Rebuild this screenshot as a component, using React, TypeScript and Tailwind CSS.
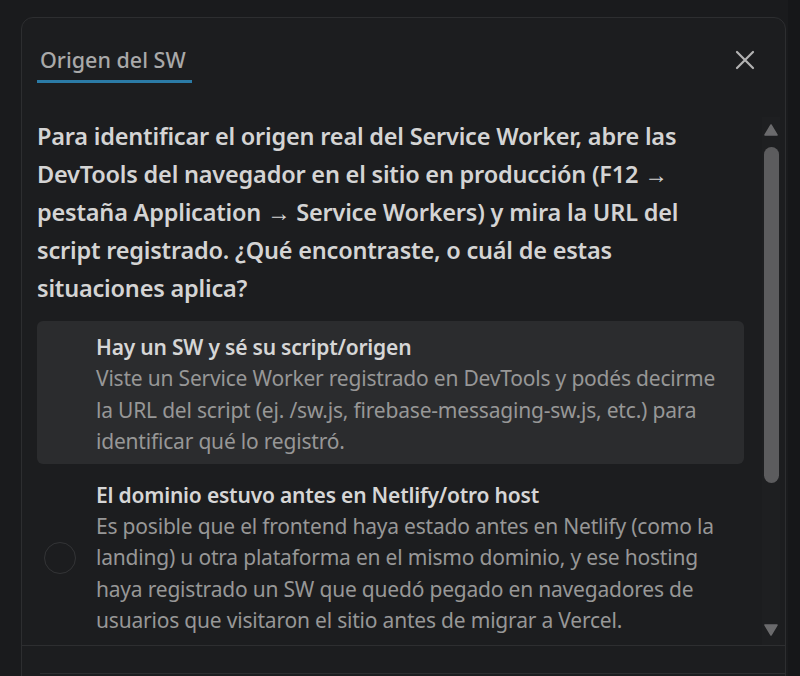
import { useState } from "react";

const options = [
  {
    title: "Hay un SW y sé su script/origen",
    body: "Viste un Service Worker registrado en DevTools y podés decirme la URL del script (ej. /sw.js, firebase-messaging-sw.js, etc.) para identificar qué lo registró.",
  },
  {
    title: "El dominio estuvo antes en Netlify/otro host",
    body: "Es posible que el frontend haya estado antes en Netlify (como la landing) u otra plataforma en el mismo dominio, y ese hosting haya registrado un SW que quedó pegado en navegadores de usuarios que visitaron el sitio antes de migrar a Vercel.",
  },
];

export default function App() {
  const [hovered] = useState(0);

  return (
    <div
      className="w-[800px] h-[676px] overflow-hidden bg-[#1a1b1d] flex"
      style={{ fontFamily: '"Noto Sans", "Open Sans", sans-serif' }}
    >
      <div className="ml-[21px] mt-[17px] w-[765px] h-[700px] bg-[#1c1d1f] border border-[#2d2e30] rounded-t-[12px] flex flex-col">
        {/* Header */}
        <div className="flex items-start justify-between pl-[15px] pr-[30px] pt-[24px] h-[66px]">
          <div className="flex flex-col">
            <span className="px-[3px] text-[21.5px] leading-[36px] font-medium text-[#a9a9a9]">
              Origen del SW
            </span>
            <div className="h-[3px] w-[155px] bg-[#2b7ba6] mt-[2px]" />
          </div>
          <button className="mt-[8px] text-[#b3b3b3]">
            <svg width="20" height="20" viewBox="0 0 20 20" fill="none">
              <path d="M2 2L18 18M18 2L2 18" stroke="currentColor" strokeWidth="2.2" strokeLinecap="round" />
            </svg>
          </button>
        </div>

        {/* Body */}
        <div className="flex h-[561px] pt-[33px]">
          <div className="flex-1 pl-[15px] pr-[18px] overflow-hidden">
            <p className="text-[23.5px] leading-[38px] font-semibold text-[#d4d4d4] tracking-[-0.2px]">
              Para identificar el origen real del Service Worker, abre las DevTools del navegador en el sitio en producción (F12 → pestaña Application → Service Workers) y mira la URL del script registrado. ¿Qué encontraste, o cuál de estas situaciones aplica?
            </p>
            <div className="mt-[14px] flex flex-col gap-[5px]">
              {options.map((o, i) => (
                <div
                  key={o.title}
                  className={`flex items-center gap-[20px] pl-[7px] pr-[10px] pt-[10px] pb-[6px] rounded-[6px] ${
                    i === hovered ? "bg-[#2b2c2e]" : ""
                  }`}
                >
                  <div
                    className={`w-[32px] h-[32px] shrink-0 rounded-full border-[1.5px] ${
                      i === hovered ? "border-transparent" : "border-[#333436]"
                    }`}
                  />
                  <div className="flex-1">
                    <div className="text-[21px] leading-[32px] font-semibold text-[#d6d6d6] tracking-[-0.2px]">{o.title}</div>
                    <div className="text-[21px] leading-[31.5px] text-[#979797] tracking-[-0.2px]">{o.body}</div>
                  </div>
                </div>
              ))}
            </div>
          </div>

          {/* Scrollbar */}
          <div className="w-[18px] mr-[5px] flex flex-col items-center bg-[#1e1f21] pt-[7px] pb-[9px]">
            <svg width="14" height="12" viewBox="0 0 14 12">
              <path d="M7 1L13 11H1Z" fill="#6b6b6d" stroke="#6b6b6d" strokeLinejoin="round" strokeWidth="1.5" />
            </svg>
            <div className="mt-[11px] w-[15px] h-[336px] rounded-full bg-[#5c5c5e]" />
            <div className="flex-1" />
            <svg width="14" height="12" viewBox="0 0 14 12">
              <path d="M1 1H13L7 11Z" fill="#6b6b6d" stroke="#6b6b6d" strokeLinejoin="round" strokeWidth="1.5" />
            </svg>
          </div>
        </div>

        {/* Footer */}
        <div className="border-t border-[#2d2e30] h-[28px]" />
        <div className="border-t border-[#2d2e30] ml-[18px]" />
      </div>
      <div className="ml-auto w-[12px] h-full bg-[#161719]" />
    </div>
  );
}
